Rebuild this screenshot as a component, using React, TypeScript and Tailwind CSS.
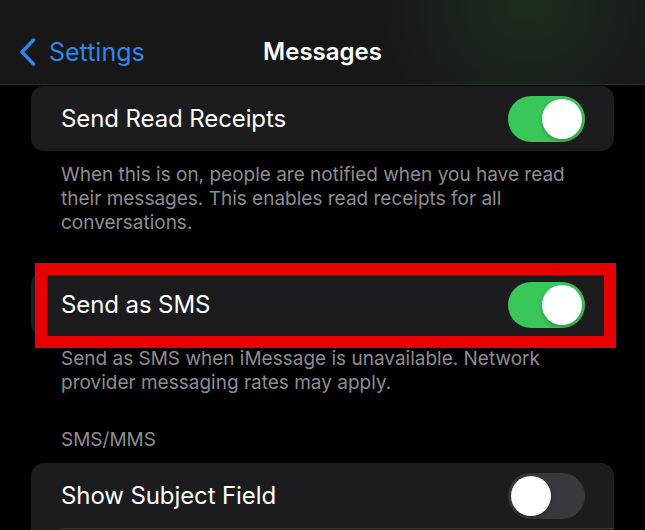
import type { ReactNode } from "react";

function Toggle({ on }: { on: boolean }) {
  return (
    <div
      className={
        on
          ? "relative h-[46px] w-[77px] rounded-full bg-[#3ac75a]"
          : "relative h-[46px] w-[77px] rounded-full bg-[#39393d]"
      }
    >
      <div
        className={
          on
            ? "absolute top-[3px] right-[3px] h-[40px] w-[40px] rounded-full bg-white shadow-[0_2px_4px_rgba(0,0,0,0.25)]"
            : "absolute top-[3px] left-[3px] h-[40px] w-[40px] rounded-full bg-white shadow-[0_2px_4px_rgba(0,0,0,0.25)]"
        }
      />
    </div>
  );
}

function Row({ label, on }: { label: string; on: boolean }) {
  return (
    <div className="flex h-[65px] items-center justify-between pl-[30px] pr-[29px]">
      <span className="text-[24px] leading-none tracking-[-0.1px] text-white">{label}</span>
      <Toggle on={on} />
    </div>
  );
}

function Footnote({ children }: { children: ReactNode }) {
  return (
    <p className="pl-[30px] pr-[30px] text-[19px] leading-[24px] text-[#8d8d92]">{children}</p>
  );
}

export default function App() {
  return (
    <div
      className="h-[530px] w-[645px] overflow-hidden bg-black"
      style={{ fontFamily: "Inter, 'Liberation Sans', sans-serif" }}
    >
      {/* Navigation bar */}
      <div className="relative flex h-[85px] items-center border-b border-[#2c2c2e] bg-[#171717] bg-[radial-gradient(circle_at_82%_0%,rgba(40,90,45,0.35),transparent_28%)] pt-[20px]">
        <div className="absolute left-[19px] top-[38px] flex items-center gap-[13px] text-[#2f86e8]">
          <svg width="17" height="28" viewBox="0 0 17 28" fill="none">
            <path d="M14.5 2 L3 14 L14.5 26" stroke="currentColor" strokeWidth="3.4" strokeLinecap="round" strokeLinejoin="round" />
          </svg>
          <span className="text-[25px] leading-none">Settings</span>
        </div>
        <h1 className="w-full text-center text-[24px] font-semibold leading-none text-white">Messages</h1>
      </div>

      <div className="px-[31px] pt-px">
        <div className="rounded-[13px] bg-[#1c1c1e]">
          <Row label="Send Read Receipts" on />
        </div>
        <div className="mt-[12px]">
          <Footnote>
            When this is on, people are notified when you have read their messages. This enables read receipts for all
            conversations.
          </Footnote>
        </div>

        {/* Highlighted row */}
        <div className="relative mt-[37px]">
          <div className="rounded-[13px] bg-[#1c1c1e]">
            <Row label="Send as SMS" on />
          </div>
          <div className="absolute left-[4px] right-[-2px] top-[-9px] bottom-[-11px] border-[12px] border-[#e80000]" />
        </div>
        <div className="mt-[10px]">
          <Footnote>Send as SMS when iMessage is unavailable. Network provider messaging rates may apply.</Footnote>
        </div>

        <div className="mt-[33px] pl-[30px] text-[19px] leading-[24px] text-[#8d8d92]">SMS/MMS</div>

        <div className="mt-[11px] rounded-[13px] bg-[#1c1c1e]">
          <Row label="Show Subject Field" on={false} />
          <div className="ml-[30px] border-t border-[#38383a]" />
          <div className="h-[60px]" />
        </div>
      </div>
    </div>
  );
}
